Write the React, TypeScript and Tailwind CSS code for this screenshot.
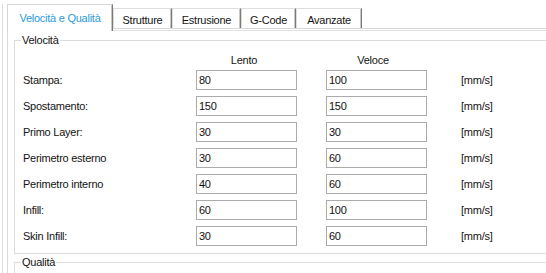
import React from "react";

const rows: [string, string, string][] = [
  ["Stampa:", "80", "100"],
  ["Spostamento:", "150", "150"],
  ["Primo Layer:", "30", "30"],
  ["Perimetro esterno", "30", "60"],
  ["Perimetro interno", "40", "60"],
  ["Infill:", "60", "100"],
  ["Skin Infill:", "30", "60"],
];

const tabs: [string, string][] = [
  ["Strutture", "w-[59px]"],
  ["Estrusione", "w-[69px]"],
  ["G-Code", "w-[55px]"],
  ["Avanzate", "w-[66px]"],
];

function Field({ value }: { value: string }) {
  return (
    <input
      readOnly
      value={value}
      className="w-[101px] h-[20px] border border-[#ababab] bg-white pl-[2px] text-[11px] tracking-[-0.25px] text-[#111] outline-none font-['Liberation_Sans',Arial,sans-serif]"
    />
  );
}

export default function App() {
  return (
    <div className="w-[546px] h-[273px] overflow-hidden bg-white pl-[2px] pt-[4px] font-['Liberation_Sans',Arial,sans-serif] text-[11px] tracking-[-0.25px] leading-[13px] text-[#141414]">
      <div className="w-[620px] h-[300px] border-l border-[#dcdcdc] pl-[4px]">
        {/* Tab strip */}
        <div className="flex items-end h-[24px] relative z-10">
          <div className="w-[106px] h-[27px] -mb-[3px] bg-white border-l border-t border-[#d6d6d6] border-r border-r-[#7a7a7a] shadow-[inset_-1px_0_0_#c8c8c8] flex justify-center pt-[7px] text-[#2b9bd8]">
            Velocità e Qualità
          </div>
          {tabs.map(([t, w]) => (
            <div
              key={t}
              className={`${w} h-[20px] bg-white border-l border-t border-[#dedede] border-r border-r-[#7a7a7a] shadow-[inset_-1px_0_0_#c8c8c8] flex justify-center pt-[5px]`}
            >
              {t}
            </div>
          ))}
        </div>
        {/* Tab page */}
        <div className="border-t border-l border-[#d9d9d9] pt-[1px]">
          <div className="border-t border-[#e3e3e3] pl-[6px] pt-[9px]">
            {/* Velocità group */}
            <div className="border border-[#dcdcdc] pl-[8px] pb-[7px]">
              <div className="w-fit -mt-[7px] -ml-[2px] px-[1px] bg-white">Velocità</div>
              <div className="flex mt-[7px] h-[13px]">
                <div className="w-[173px]" />
                <div className="w-[101px] pr-[5px] text-center">Lento</div>
                <div className="w-[101px] ml-[29px] pr-[7px] text-center">Veloce</div>
              </div>
              <div className="flex flex-col gap-[6px] mt-[3px]">
                {rows.map(([label, a, b]) => (
                  <div key={label} className="flex items-center h-[20px]">
                    <div className="w-[173px]">{label}</div>
                    <Field value={a} />
                    <div className="ml-[29px]">
                      <Field value={b} />
                    </div>
                    <div className="ml-[34px]">[mm/s]</div>
                  </div>
                ))}
              </div>
            </div>
            {/* Qualità group */}
            <div className="mt-[8px] border border-[#dcdcdc] h-[40px] pl-[8px]">
              <div className="w-fit -mt-[7px] -ml-[2px] px-[1px] bg-white">Qualità</div>
            </div>
          </div>
        </div>
      </div>
    </div>
  );
}
